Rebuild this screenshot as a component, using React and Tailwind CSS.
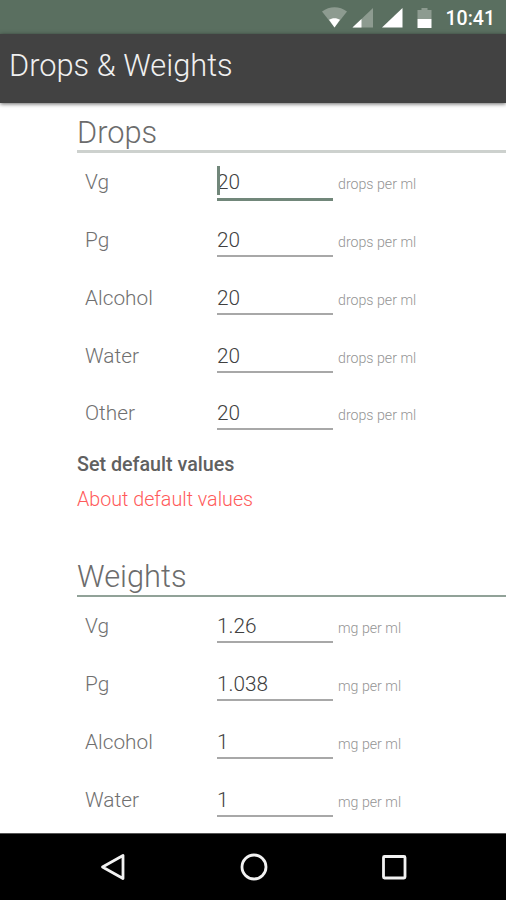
import { useState } from 'react';

const dropFields = [
  { name: 'Vg', value: '20' },
  { name: 'Pg', value: '20' },
  { name: 'Alcohol', value: '20' },
  { name: 'Water', value: '20' },
  { name: 'Other', value: '20' },
];

const weightFields = [
  { name: 'Vg', value: '1.26' },
  { name: 'Pg', value: '1.038' },
  { name: 'Alcohol', value: '1' },
  { name: 'Water', value: '1' },
];

const StatusBar = () => (
  <div className="flex h-[34px] shrink-0 items-center justify-end bg-[#5a6f60] pr-[11px]">
    <svg width="112" height="34" viewBox="0 0 112 34" className="mr-[13px]">
      <path d="M1 11.500C8.500 5.800 18.500 5.800 26 11.500L13.500 27.500Z" fill="#8d9b90" />
      <path d="M8 19.800C11 17.600 16 17.600 19 19.800L13.500 27.500Z" fill="#fff" />
      <path d="M31.500 27.500L52 8V27.500Z" fill="#8d9b90" />
      <path d="M31.500 27.500L40.500 19V27.500Z" fill="#fff" />
      <path d="M61 27.500L81.500 8V27.500Z" fill="#fff" />
      <path d="M96.500 10H100.500V8H106.500V10H110.500V19H96.500Z" fill="#8d9b90" />
      <path d="M96.500 19H110.500V28H96.500Z" fill="#fff" />
    </svg>
    <span className="pt-1 text-[19.500px] font-medium leading-none text-white">10:41</span>
  </div>
);

const Field = ({ name, value, unit, active, onFocus }) => (
  <label className="flex h-[58px] items-start pt-[9px] pl-2 nth-5:h-[57px] nth-5:pt-2" onClick={onFocus}>
    <span className="w-[132px] text-[20.8px] font-light leading-[40px] text-[#707070]">{name}</span>
    <span
      className={`relative w-[116px] text-[20.8px] font-light text-[#404040] ${
        active
          ? 'h-[39px] border-b-[3px] border-[#71877a] leading-[40px]'
          : 'h-[37px] border-b-2 border-[#a8a8a8] leading-[40px]'
      }`}
    >
      {active && <span className="absolute top-[4px] left-0 h-[29px] w-[3px] bg-[#71877a]" />}
      {value}
    </span>
    <span className="ml-[5px] pt-[2px] text-[14.2px] font-light leading-[40px] text-[#949494]">{unit}</span>
  </label>
);

const NavBar = () => (
  <div className="flex h-[67px] shrink-0 items-center justify-center gap-[110px] border-t border-[#555] bg-black pb-px pl-px">
    <svg width="30" height="30" viewBox="0 0 30 30" fill="none" stroke="#f2f2f2" strokeWidth="2.8">
      <path d="M3.500 15L24 3.500V26.500Z" strokeLinejoin="round" />
    </svg>
    <svg width="30" height="30" viewBox="0 0 30 30" fill="none" stroke="#f2f2f2" strokeWidth="2.8">
      <circle cx="15" cy="15" r="12" />
    </svg>
    <svg width="30" height="30" viewBox="0 0 30 30" fill="none" stroke="#f2f2f2" strokeWidth="2.8">
      <rect x="4.500" y="4.500" width="21.500" height="21.500" rx="1" />
    </svg>
  </div>
);

const App = () => {
  const [focused, setFocused] = useState('drops-Vg');

  return (
    <div className="flex h-[900px] w-[506px] flex-col overflow-hidden bg-white font-['Roboto',sans-serif]">
      <StatusBar />
      <header className="z-10 flex h-[69px] shrink-0 items-center bg-[#424242] pb-[4px] pl-[9px] shadow-[0_1px_4px_rgba(0,0,0,0.6)]">
        <h1 className="text-[30.8px] font-light leading-none text-[#f0f0f0]">Drops & Weights</h1>
      </header>

      <main className="min-h-0 flex-1 overflow-hidden pl-[77px]">
        <h2 className="flex h-[50px] items-end border-b-[3px] border-[#cdd1ce] text-[30.8px] font-light leading-[34px] text-[#6c6c6c]">
          Drops
        </h2>
        <div>
          {dropFields.map((field) => (
            <Field
              key={field.name}
              name={field.name}
              value={field.value}
              unit="drops per ml"
              active={focused === `drops-${field.name}`}
              onFocus={() => setFocused(`drops-${field.name}`)}
            />
          ))}
        </div>

        <div className="flex h-[106px] flex-col items-start pt-[5px] text-[19.7px] leading-[35px]">
          <button className="font-medium text-[#606060]">Set default values</button>
          <button className="font-light text-[#ff5a5a]">About default values</button>
        </div>

        <h2 className="flex h-[49px] items-end border-b-2 border-[#91a298] text-[30.8px] font-light leading-[36px] text-[#6c6c6c]">
          Weights
        </h2>
        <div>
          {weightFields.map((field) => (
            <Field
              key={field.name}
              name={field.name}
              value={field.value}
              unit="mg per ml"
              active={focused === `weights-${field.name}`}
              onFocus={() => setFocused(`weights-${field.name}`)}
            />
          ))}
        </div>
      </main>
      <NavBar />
    </div>
  );
};

export default App;
